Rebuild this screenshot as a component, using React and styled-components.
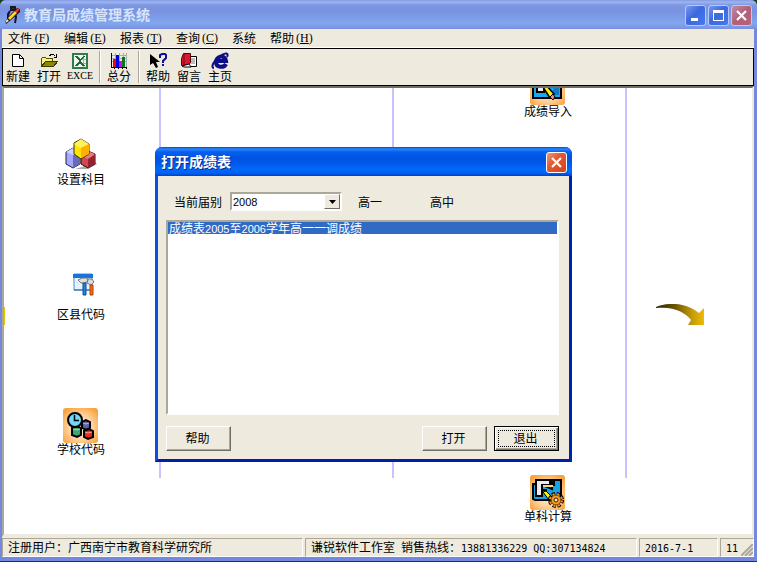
import React, { useState } from 'react';
import styled, { createGlobalStyle, css } from 'styled-components';

const cjk = '"Noto Sans CJK SC", sans-serif';
const face = '#eeeade';
const shade = '#aca899';
const dark = '#716f64';

const GlobalStyle = createGlobalStyle`
  * { box-sizing: border-box; }
  body { margin: 0; background: #1d3a22; font: 12px/12px ${cjk}; color: #000; }
  button, select { font: inherit; color: inherit; }
  ul { list-style: none; margin: 0; padding: 0; }
  svg { display: block; }
`;

const Screen = styled.div`
  min-height: 100vh;
  padding-bottom: 1px;
  display: flex;
  flex-direction: column;
`;

const Window = styled.div`
  flex: 1;
  display: flex;
  flex-direction: column;
  border: solid #7488de;
  border-width: 0 3px 4px 2px;
  border-radius: 6px 6px 0 0;
  background: #7488de;
`;

const TitleBar = styled.header`
  height: 29px;
  margin: 0 -3px 0 -2px;
  padding: 2px 5px 0 4px;
  display: flex;
  align-items: center;
  gap: 3px;
  border-radius: 6px 6px 0 0;
  background: linear-gradient(#8399e4 0, #9db5f1 2px, #7e99e2 5px, #7a91df 10px, #7b9ae5 16px, #81a6ee 23px, #7e9dea 26px, #7890df 29px);
`;

const WindowTitle = styled.h1`
  margin: 0;
  padding-bottom: 3px;
  flex: 1;
  font-size: 14px;
  line-height: 18px;
  font-weight: 700;
  color: #d8e4fc;
`;

const CaptionButtons = styled.div`
  display: flex;
  gap: 2px;
`;

const CaptionButton = styled.button`
  width: 21px;
  height: 21px;
  padding: 0;
  display: grid;
  place-items: center;
  border: 1px solid ${(p) => (p.$tone === 'alert' ? '#fff' : '#b9c9f6')};
  border-radius: 3px;
  background: ${(p) =>
    ({
      blue: 'linear-gradient(135deg, #7798ee, #3c68de 45%, #4679ef)',
      muted: 'linear-gradient(135deg, #c08da5, #b06078 50%, #b5667c)',
      alert: 'linear-gradient(135deg, #f0987c, #e05a34 40%, #d6431c)',
    })[p.$tone]};
`;

const MenuBar = styled.nav`
  height: 19px;
  padding: 0 0 1px 6px;
  display: flex;
  align-items: center;
  gap: 14px;
  background: ${face};
  border-bottom: 1px solid #fff;
`;

const MenuItem = styled.button`
  padding: 0;
  border: 0;
  background: none;
  display: flex;
  align-items: center;
  white-space: nowrap;
`;

const Shortcut = styled.span`
  width: 18px;
  padding-left: 2px;
  font-family: "Liberation Serif", serif;
`;

const SerifLabel = styled.span`
  font-family: "Liberation Serif", serif;
  font-size: 10px;
`;

const Latin = styled.span`
  font-family: "DejaVu Sans Mono", monospace;
  font-size: 10px;
`;

const Digits = styled.span`
  font-family: "Liberation Sans", sans-serif;
  font-size: 11px;
`;

const ToolBar = styled.div`
  height: 38px;
  display: flex;
  border: 1px solid #000;
  background: ${face};
`;

const ToolButton = styled.button`
  width: 31px;
  padding: 3px 1px 0 0;
  border: 0;
  background: none;
  display: flex;
  flex-direction: column;
  align-items: center;
  white-space: nowrap;
`;

const ToolDivider = styled.div`
  width: 2px;
  margin: 2px 3px;
  background: linear-gradient(90deg, ${shade} 50%, #fff 50%);
`;

const Workspace = styled.main`
  position: relative;
  flex: 1;
  overflow: hidden;
  background: #fff;
  border: solid;
  border-width: 2px 2px 3px;
  border-color: ${dark} ${face} ${face} ${shade};
`;

const Guide = styled.div`
  position: absolute;
  top: 0;
  left: ${(p) => p.$x}px;
  width: 2px;
  height: 390px;
  background: #c8c2ff;
`;

const Node = styled.button`
  position: absolute;
  left: ${(p) => p.$x}px;
  top: ${(p) => p.$y}px;
  width: 60px;
  padding: 0;
  border: 0;
  background: none;
  display: flex;
  flex-direction: column;
  align-items: center;
`;

const NodeIcon = styled.span`
  height: 35px;
`;

const Arrow = styled.svg`
  position: absolute;
  left: ${(p) => p.$x}px;
  top: ${(p) => p.$y}px;
`;

const Dialog = styled.section`
  position: absolute;
  left: 151px;
  top: 59px;
  width: 417px;
  border: solid;
  border-width: 0 3px 3px;
  border-color: #0a3fd8 #0022b0 #0020a8 #0a4fe0;
  border-radius: 7px 7px 0 0;
  background: ${face};
`;

const DialogTitle = styled.header`
  height: 29px;
  margin: 0 -3px;
  padding: 1px 5px 0 6px;
  display: flex;
  align-items: center;
  justify-content: space-between;
  border-radius: 7px 7px 0 0;
  background: linear-gradient(#0648c8 0, #2a86fa 2px, #0560ee 5px, #0054e3 10px, #0057e8 16px, #0068fc 22px, #0062f6 26px, #0040c4 29px);
`;

const DialogHeading = styled.h2`
  margin: 0;
  padding-bottom: 2px;
  font-size: 14px;
  line-height: 18px;
  font-weight: 700;
  color: #fff;
  text-shadow: 1px 1px #0a2c90;
`;

const DialogBody = styled.div`
  padding: 16px 10px 8px 8px;
`;

const FilterRow = styled.div`
  display: grid;
  grid-template-columns: 48px 112px 64px auto;
  column-gap: 8px;
  align-items: center;
  padding-left: 8px;
  margin-bottom: 9px;
`;

const FilterText = styled.span`
  padding-left: 8px;
`;

const sunken = css`
  border: 2px solid;
  border-color: ${shade} #fff #fff ${shade};
  background: #fff;
`;

const SelectFrame = styled.div`
  position: relative;
  height: 19px;
  display: flex;
  ${sunken}
`;

const Select = styled.select`
  appearance: none;
  width: 100%;
  padding: 0 18px 0 1px;
  border: 0;
  outline: 0;
  background: none;
  font-family: "Liberation Sans", sans-serif;
  font-size: 11px;
`;

const SelectArrow = styled.span`
  position: absolute;
  top: 0;
  right: 0;
  width: 16px;
  height: 15px;
  display: grid;
  place-items: center;
  pointer-events: none;
  background: ${face};
  border: 1px solid;
  border-color: #fff ${dark} ${dark} #fff;
`;

const ListBox = styled.ul`
  height: 195px;
  overflow: auto;
  ${sunken}
`;

const ListRow = styled.li`
  height: 12px;
  padding-left: 1px;
  background: ${(p) => (p.$selected ? '#316ac5' : '#fff')};
  color: ${(p) => (p.$selected ? '#fff' : '#000')};
`;

const ButtonRow = styled.footer`
  margin-top: 11px;
  display: flex;
  gap: 7px;
`;

const PushButton = styled.button`
  width: 65px;
  height: 25px;
  padding: 0 2px 2px 0;
  margin-right: ${(p) => (p.$lead ? 'auto' : 0)};
  border: 1px solid;
  border-color: #fff ${dark} ${dark} #fff;
  background: ${face};
  box-shadow: inset -1px -1px ${shade};
  ${(p) =>
    p.$default &&
    css`
      border: 1px solid #000;
      box-shadow: inset 1px 1px #fff, inset -1px -1px ${dark}, inset -2px -2px ${shade};
      outline: 1px dotted #000;
      outline-offset: -5px;
    `}
`;

const StatusBar = styled.footer`
  height: 20px;
  padding: 1px 0 0;
  display: grid;
  grid-template-columns: 301px 1fr 79px 34px;
  gap: 2px;
  background: ${face};
`;

const StatusPanel = styled.div`
  position: relative;
  padding-left: 5px;
  line-height: 16px;
  overflow: hidden;
  white-space: nowrap;
  border: 1px solid;
  border-color: ${shade} #fff #fff ${shade};
`;

const Grip = styled.svg`
  position: absolute;
  right: 0;
  bottom: 0;
`;

const PenIcon = () => (
  <svg width="17" height="19" viewBox="0 0 17 19">
    <path d="M7 1h4v3H7zM6 5l-2 3v8M11 7l1 4-1 6" fill="#333" stroke="#16162e" strokeWidth="2" />
    <path d="M1 16l3-5L13 2l3 1v3L7 14l-5 4z" fill="#1b1020" />
    <path d="M4 12l7-7 2 2-7 7z" fill="#ffd820" />
    <path d="M11 5l3-3 2 1-3 4z" fill="#e33b24" />
    <path d="M1 17l2-4 2 2z" fill="#f4ead0" />
    <path d="M6 14l7-7" stroke="#b46812" />
  </svg>
);

const Cross = () => (
  <svg width="13" height="13" viewBox="0 0 13 13">
    <path d="M2 2l9 9M11 2l-9 9" stroke="#fff" strokeWidth="2.200" />
  </svg>
);

const PageIcon = () => (
  <svg width="18" height="18" viewBox="0 0 18 18">
    <path d="M3.500 2.500h7l4 4v8h-11z" fill="#fff" stroke="#000" />
    <path d="M10.500 2.500v4h4" fill="none" stroke="#000" />
  </svg>
);

const FolderIcon = () => (
  <svg width="18" height="18" viewBox="0 0 18 18" shapeRendering="crispEdges">
    <path d="M1.500 14.500v-8l1-1h3l1 1h6v3" fill="#fff27a" stroke="#555000" />
    <path d="M1.500 14.500l4-5h12l-4 5z" fill="#8c8a00" stroke="#3c3a00" />
    <path d="M9.500 3.500l2-1h2l2 2M16.500 2v3h-3" fill="none" stroke="#000" />
  </svg>
);

const SheetIcon = () => (
  <svg width="18" height="18" viewBox="0 0 18 18" shapeRendering="crispEdges">
    <path d="M1 1h16v16H1z" fill="#2f7d4f" />
    <path d="M3 3h12v12H3z" fill="#f2f6ee" />
    <path d="M12 3v12M9 7h6M9 11h6" stroke="#8fbd9c" />
    <path d="M4 4h3l2 3 3-3h2l-4 5 4 5h-3l-2-3-3 3H4l4-5z" fill="#1d6b3c" />
  </svg>
);

const ChartIcon = () => (
  <svg width="18" height="18" viewBox="0 0 18 18" shapeRendering="crispEdges">
    <path d="M2 3.500h15M2 6.500h15M2 9.500h15M5.500 1v14M9.500 1v14M13.500 1v14M16.500 1v14" stroke="#aaa" />
    <path d="M1 1h1v15H1zM1 15h16v1H1z" fill="#000" />
    <path d="M3 7h3v8H3z" fill="#f00" />
    <path d="M6 3h3v12H6z" fill="#0000e8" />
    <path d="M9 9h3v6H9z" fill="#e400e4" />
    <path d="M12 5h3v10h-3z" fill="#007a20" />
    <path d="M4.500 16v1M8.500 16v1M12.500 16v1M16.500 16v1" stroke="#000" />
  </svg>
);

const HelpIcon = () => (
  <svg width="20" height="18" viewBox="0 0 20 18">
    <path d="M2 2v11l3-2 3 5 2-1-2-5h4z" fill="#000" />
    <path d="M12 6V3l2-1h3l1 1v3l-3 3v2" fill="none" stroke="#101094" strokeWidth="2" />
    <path d="M14 12h2v2h-2z" fill="#101094" />
  </svg>
);

const BookIcon = () => (
  <svg width="18" height="18" viewBox="0 0 18 18">
    <path d="M6.500 4.500h10v10h-10z" fill="#fff" stroke="#000" />
    <path d="M10 7h5M10 9h5M10 11h5" stroke="#777" />
    <path d="M1.500 6.500l2-5h7v9l-2 2-7 1z" fill="#d51a30" stroke="#5c0008" />
    <path d="M2 14l7-2 2 3H4z" fill="#fff" stroke="#000" />
    <path d="M4 2v11" stroke="#7d0010" />
  </svg>
);

const WebIcon = () => (
  <svg width="18" height="18" viewBox="0 0 18 18">
    <path d="M15 12c-2 4-10 4-10-2s9-8 10-1H6" fill="none" stroke="#0d0d88" strokeWidth="4" />
    <path d="M3 16c-4 0 0-8 6-12s9-3 7 1" fill="none" stroke="#0d0d88" strokeWidth="2" />
  </svg>
);

const CubesIcon = () => (
  <svg width="32" height="32" viewBox="0 0 32 32">
    <path d="M17 29l12-6 3 3-9 5H10z" fill="#aaa" />
    <path d="M1 14l7-4 7 4v12l-7 4-7-4z" fill="#a4a8ff" stroke="#20203c" />
    <path d="M1 14l7 3 7-3-7-4z" fill="#cfd2ff" />
    <path d="M8 17l7-3v12l-7 4z" fill="#686cb4" />
    <path d="M16 17l7-4 7 3v10l-7 4-7-4z" fill="#d24850" stroke="#300810" />
    <path d="M16 18l7 3 7-5-7-3z" fill="#e67b7e" />
    <path d="M23 21l7-4v9l-7 4z" fill="#942330" />
    <path d="M9 5l7-4 8 5v10l-8 5-7-5z" fill="#ffe500" stroke="#40300a" />
    <path d="M9 6l7 4 8-4-8-5z" fill="#fff05c" />
    <path d="M16 10l8-4v10l-8 4z" fill="#ffb000" />
  </svg>
);

const ToolsIcon = () => (
  <svg width="30" height="24" viewBox="-6 0 30 24">
    <path d="M2 1h18v16H2z" fill="#e6f3ff" stroke="#4a8ed2" />
    <path d="M1 1h20v4H1z" fill="#1674df" />
    <path d="M2 17h18" stroke="#2863a4" />
    <path d="M6 7l4-2h5l1 3-3 2H9zM16 6h4l2 3-3 3-4-2z" fill="#ddd" stroke="#777" />
    <path d="M11 10h3v12h-3z" fill="#2684dc" stroke="#0d4d94" />
    <path d="M18 12h3v10h-3z" fill="#f06a18" stroke="#b23e08" />
  </svg>
);

const Tile = ({ id, children }) => (
  <svg width="36" height="35" viewBox="0 0 36 35">
    <defs>
      <radialGradient id={id} cx="50%" cy="55%" r="65%">
        <stop offset="0" stopColor="#fff6dc" />
        <stop offset="0.55" stopColor="#ffd09a" />
        <stop offset="1" stopColor="#f9a13a" />
      </radialGradient>
    </defs>
    <rect width="35" height="35" rx="3" fill={`url(#${id})`} />
    {children}
  </svg>
);

const ClockTile = () => (
  <Tile id="clockTile">
    <path d="M19 14l4-2 4 2v6l-4 2-4-2z" fill="#5a62a8" stroke="#000" strokeWidth="2" />
    <path d="M9 20l5-2 4 2v7l-4 2-5-2z" fill="#3da474" stroke="#000" strokeWidth="2" />
    <path d="M21 23l5-2 4 2v6l-5 2-4-2z" fill="#f02818" stroke="#000" strokeWidth="2" />
    <path d="M10 21l4 1 3-1M22 24l3 1 4-1M20 15l3 1 3-1" stroke="#fff" strokeOpacity=".55" fill="none" />
    <circle cx="12" cy="12" r="7" fill="#72d7fb" stroke="#000" strokeWidth="2" />
    <path d="M11.500 7v5.500H16" fill="none" stroke="#000" strokeWidth="1.500" />
  </Tile>
);

const ImportTile = () => (
  <Tile id="importTile">
    <path d="M3 6h28v22H3z" fill="#18a8ee" stroke="#000" strokeWidth="2" />
    <path d="M7 4h7v18H7z" fill="#eef" stroke="#000" strokeWidth="2" />
    <path d="M24 17l5 1v7h-7z" fill="#0d78c4" />
    <path d="M13 17l3-2 8 9-4 4z" fill="#ffeb13" stroke="#000" strokeWidth="1.500" />
    <path d="M20 27l3-3 2 3-2 3z" fill="#ec8b80" stroke="#000" />
  </Tile>
);

const GearTile = () => (
  <Tile id="gearTile">
    <path d="M3 9h7l12 5V5h9v20H5l-2-1z" fill="#16a2e4" stroke="#000" strokeWidth="2" />
    <path d="M6 5h14v5h-8v11H6z" fill="#e9e9ee" stroke="#000" strokeWidth="2" />
    <path d="M11 10h13V5M12 15h5" fill="none" stroke="#000" strokeWidth="2" />
    <path d="M13 11h10" stroke="#f5d68a" strokeWidth="2" />
    <path d="M13 17l3-1 6 6-3 3z" fill="#fff01a" stroke="#000" />
    <circle cx="26" cy="25" r="6" fill="none" stroke="#000" strokeWidth="4" strokeDasharray="3 1.710" />
    <circle cx="26" cy="25" r="5" fill="#f49a2b" stroke="#663300" />
    <circle cx="26" cy="25" r="6" fill="none" stroke="#f49a2b" strokeWidth="2" strokeDasharray="2 2.710" strokeDashoffset="-0.500" />
    <circle cx="26" cy="25" r="2" fill="#ffe2ad" stroke="#412200" />
  </Tile>
);

const MENUS = [
  ['文件', 'F'],
  ['编辑', 'E'],
  ['报表', 'T'],
  ['查询', 'C'],
  ['系统', ''],
  ['帮助', 'H'],
];

const TOOLS = [
  [
    ['新建', PageIcon],
    ['打开', FolderIcon],
    ['EXCE', SheetIcon],
  ],
  [['总分', ChartIcon]],
  [
    ['帮助', HelpIcon],
    ['留言', BookIcon],
    ['主页', WebIcon],
  ],
];

const NODES = [
  { label: '成绩导入', x: 514, y: -18, Icon: ImportTile },
  { label: '设置科目', x: 47, y: 50, Icon: CubesIcon },
  { label: '区县代码', x: 47, y: 185, Icon: ToolsIcon },
  { label: '学校代码', x: 47, y: 320, Icon: ClockTile },
  { label: '单科计算', x: 514, y: 387, Icon: GearTile },
];

function OpenDialog() {
  const [year, setYear] = useState('2008');
  return (
    <Dialog role="dialog" aria-labelledby="dialog-title">
      <DialogTitle>
        <DialogHeading id="dialog-title">打开成绩表</DialogHeading>
        <CaptionButton $tone="alert" aria-label="关闭">
          <Cross />
        </CaptionButton>
      </DialogTitle>
      <DialogBody>
        <FilterRow>
          <label htmlFor="year">当前届别</label>
          <SelectFrame>
            <Select id="year" value={year} onChange={(e) => setYear(e.target.value)}>
              <option>2008</option>
            </Select>
            <SelectArrow>
              <svg width="7" height="4" viewBox="0 0 7 4">
                <path d="M0 0h7L3.500 4z" />
              </svg>
            </SelectArrow>
          </SelectFrame>
          <FilterText>高一</FilterText>
          <FilterText>高中</FilterText>
        </FilterRow>
        <ListBox role="listbox" aria-label="成绩表" tabIndex={0}>
          <ListRow role="option" aria-selected="true" $selected>
            成绩表<Digits>2005</Digits>至<Digits>2006</Digits>学年高一一调成绩
          </ListRow>
        </ListBox>
        <ButtonRow>
          <PushButton $lead>帮助</PushButton>
          <PushButton>打开</PushButton>
          <PushButton $default>退出</PushButton>
        </ButtonRow>
      </DialogBody>
    </Dialog>
  );
}

export default function App() {
  return (
    <Screen>
      <GlobalStyle />
      <Window>
        <TitleBar>
          <PenIcon />
          <WindowTitle>教育局成绩管理系统</WindowTitle>
          <CaptionButtons>
            <CaptionButton $tone="blue" aria-label="最小化">
              <svg width="13" height="13" viewBox="0 0 13 13">
                <path d="M2 9h7v3H2z" fill="#fff" />
              </svg>
            </CaptionButton>
            <CaptionButton $tone="blue" aria-label="最大化">
              <svg width="13" height="13" viewBox="0 0 13 13">
                <path d="M1 1h11v11H1zM2 4v7h9V4z" fill="#fff" fillRule="evenodd" />
              </svg>
            </CaptionButton>
            <CaptionButton $tone="muted" aria-label="关闭">
              <Cross />
            </CaptionButton>
          </CaptionButtons>
        </TitleBar>
        <MenuBar>
          {MENUS.map(([name, key]) => (
            <MenuItem key={name}>
              {name}
              {key && (
                <Shortcut>
                  (<u>{key}</u>)
                </Shortcut>
              )}
            </MenuItem>
          ))}
        </MenuBar>
        <ToolBar role="toolbar">
          {TOOLS.map((group, i) => (
            <React.Fragment key={i}>
              {i > 0 && <ToolDivider />}
              {group.map(([name, Icon]) => (
                <ToolButton key={name}>
                  <Icon />
                  {name === 'EXCE' ? <SerifLabel>{name}</SerifLabel> : name}
                </ToolButton>
              ))}
            </React.Fragment>
          ))}
        </ToolBar>
        <Workspace>
          <Guide $x={155} />
          <Guide $x={388} />
          <Guide $x={621} />
          <Arrow $x={0} $y={219} width="1" height="18">
            <path d="M0 0h1v18H0z" fill="#e8c800" />
          </Arrow>
          <Arrow $x={652} $y={216} width="48" height="21" viewBox="0 0 48 21">
            <defs>
              <linearGradient id="gold">
                <stop offset="0" stopColor="#2c2400" />
                <stop offset="0.4" stopColor="#6c5600" />
                <stop offset="0.75" stopColor="#c49a0c" />
                <stop offset="1" stopColor="#eebc00" />
              </linearGradient>
            </defs>
            <path d="M0 3C15-3 32 0 43 9l5-5v17H32l3-5C30 9 18 2 0 4z" fill="url(#gold)" />
          </Arrow>
          {NODES.map(({ label, x, y, Icon }) => (
            <Node key={label} $x={x} $y={y}>
              <NodeIcon>
                <Icon />
              </NodeIcon>
              {label}
            </Node>
          ))}
          <OpenDialog />
        </Workspace>
        <StatusBar>
          <StatusPanel>注册用户：广西南宁市教育科学研究所</StatusPanel>
          <StatusPanel>
            谦锐软件工作室<Latin> </Latin>销售热线：<Latin>13881336229 QQ:307134824</Latin>
          </StatusPanel>
          <StatusPanel>
            <Latin>2016-7-1</Latin>
          </StatusPanel>
          <StatusPanel>
            <Latin>11</Latin>
            <Grip width="12" height="12" viewBox="0 0 12 12">
              <path d="M0 12L12 0M4 12l8-8M8 12l4-4" stroke={shade} strokeWidth="2" />
            </Grip>
          </StatusPanel>
        </StatusBar>
      </Window>
    </Screen>
  );
}
